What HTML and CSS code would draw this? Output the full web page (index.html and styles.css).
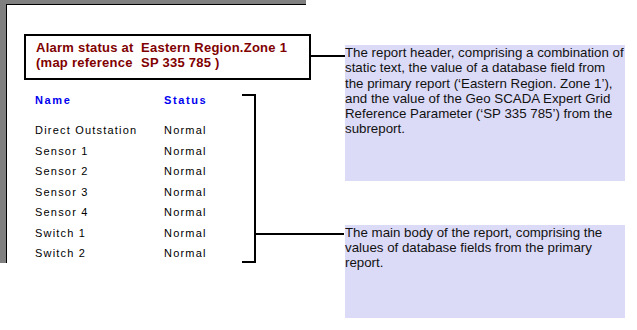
FILE: index.html
```html
<!DOCTYPE html>
<html>
<head>
<meta charset="utf-8">
<link rel="stylesheet" href="styles.css">
</head>
<body>
<div class="canvas">
  <div class="frame">
    <div class="page">
      <div class="report-header">
        <span>Alarm status at</span><span>Eastern Region.Zone 1</span>
        <span>(map reference</span><span>SP 335 785 )</span>
      </div>
      <div class="table">
        <div class="th">Name</div><div class="th">Status</div>
        <div class="row"><span>Direct Outstation</span><span>Normal</span></div>
        <div class="row"><span>Sensor 1</span><span>Normal</span></div>
        <div class="row"><span>Sensor 2</span><span>Normal</span></div>
        <div class="row"><span>Sensor 3</span><span>Normal</span></div>
        <div class="row"><span>Sensor 4</span><span>Normal</span></div>
        <div class="row"><span>Switch 1</span><span>Normal</span></div>
        <div class="row"><span>Switch 2</span><span>Normal</span></div>
      </div>
    </div>
  </div>

  <div class="leader leader-header"></div>
  <div class="note note-header">The report header, comprising a combination of static text, the value of a database field from the primary report (‘Eastern Region. Zone 1’), and the value of the Geo SCADA Expert Grid Reference Parameter (‘SP 335 785’) from the subreport.</div>

  <div class="bracket"></div>
  <div class="leader leader-body"></div>
  <div class="note note-body">The main body of the report, comprising the values of database fields from the primary report.</div>
</div>
</body>
</html>
```

FILE: styles.css
```css
html, body {
  margin: 0;
  padding: 0;
  background: #ffffff;
}

.canvas {
  position: relative;
  width: 637px;
  height: 330px;
  overflow: hidden;
  font-family: "Liberation Sans", Arial, sans-serif;
}

.frame {
  width: 300px;
  border-top: 4px solid #808080;
  border-left: 6px solid #808080;
}

.page {
  border-top: 1px solid #000;
  border-left: 1px solid #000;
  background: #fff;
  display: flex;
  flex-direction: column;
  align-items: flex-start;
  height: 258px;
}

.report-header {
  margin: 29px 0 0 17px;
  width: 273px;
  border: 2px solid #000;
  padding: 4px 0 8px 10px;
  display: grid;
  grid-template-columns: 105px auto;
  font-weight: bold;
  font-size: 13px;
  line-height: 15px;
  letter-spacing: 0.25px;
  color: #800000;
  white-space: nowrap;
  position: relative;
  z-index: 1;
  background: #fff;
}

.table {
  margin: 10px 0 0 28px;
  display: grid;
  grid-template-columns: 129px auto;
  font-size: 11px;
  line-height: 20.5px;
  letter-spacing: 1.2px;
  white-space: nowrap;
}

.th {
  color: #0000f0;
  font-weight: bold;
  letter-spacing: 1.6px;
  margin-bottom: 9.5px;
}

.row {
  display: contents;
  color: #000;
}

.leader {
  position: absolute;
  height: 2px;
  background: #000;
}

.leader-header {
  left: 311px;
  top: 55px;
  width: 34px;
}

.leader-body {
  left: 256px;
  top: 233px;
  width: 88px;
}

.bracket {
  position: absolute;
  left: 242px;
  top: 94px;
  width: 12px;
  height: 165px;
  border: 2px solid #000;
  border-left: none;
}

.note {
  position: absolute;
  left: 345px;
  width: 280px;
  background: #dcdbf7;
  color: #111;
  font-size: 13.3px;
}

.note-header {
  top: 45px;
  height: 136px;
  line-height: 15.3px;
}

.note-body {
  top: 225px;
  height: 93px;
  line-height: 15px;
}
```
